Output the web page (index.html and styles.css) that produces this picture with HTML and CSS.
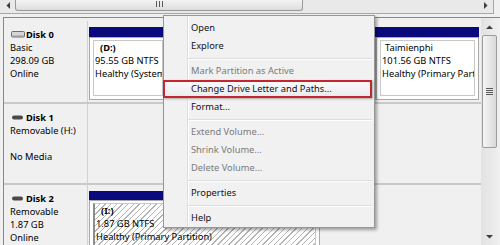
FILE: index.html
```html
<!DOCTYPE html>
<html lang="en">
<head>
  <meta charset="UTF-8">
  <title>Disk Management</title>
  <link rel="stylesheet" href="styles.css">
</head>
<body>
  <div class="hscroll">
    <div class="hbtn">
      <svg width="4" height="7" viewBox="0 0 4 7"><polygon points="4,0 4,7 0.5,3.5" fill="#3c3c3c"/></svg>
    </div>
    <div class="hthumb"><span class="grip"></span></div>
    <div class="htrack"></div>
    <div class="hbtn">
      <svg width="4" height="7" viewBox="0 0 4 7"><polygon points="0,0 0,7 3.5,3.5" fill="#3c3c3c"/></svg>
    </div>
  </div>

  <div class="pane">
    <div class="disks">
      <div class="disk disk-0">
        <div class="disk-label">
          <div class="disk-name">
            <svg class="disk-icon" width="14" height="7" viewBox="0 0 14 7"><rect x="0.5" y="0.5" width="13" height="5.5" rx="1" fill="#d6d6d6" stroke="#6e6e6e"/><rect x="1.5" y="4.5" width="11" height="1" fill="#9a9a9a"/></svg>
            Disk 0
          </div>
          <div>Basic</div>
          <div>298.09 GB</div>
          <div>Online</div>
        </div>
        <div class="parts">
          <div class="part part-d">
            <div class="bar"></div>
            <div class="body">
              <div class="inner">
                <div class="vol noname">(D:)</div>
                <div>95.55 GB NTFS</div>
                <div>Healthy (System</div>
              </div>
            </div>
          </div>
          <!-- partition hidden under the context menu -->
          <div class="part part-c">
            <div class="bar"></div>
            <div class="body">
              <div class="inner"></div>
            </div>
          </div>
          <div class="part part-t">
            <div class="bar"></div>
            <div class="body">
              <div class="inner">
                <div class="vol-plain">Taimienphi</div>
                <div>101.56 GB NTFS</div>
                <div>Healthy (Primary Partition)</div>
              </div>
            </div>
          </div>
        </div>
      </div>

      <div class="disk disk-1">
        <div class="disk-label">
          <div class="disk-name">
            <svg class="disk-icon" width="14" height="7" viewBox="0 0 14 7"><rect x="1" y="1.5" width="11" height="4" rx="2" fill="#4a4a4a"/></svg>
            Disk 1
          </div>
          <div>Removable (H:)</div>
          <div>&nbsp;</div>
          <div>No Media</div>
        </div>
        <div class="parts"></div>
      </div>

      <div class="disk disk-2">
        <div class="disk-label">
          <div class="disk-name">
            <svg class="disk-icon" width="14" height="7" viewBox="0 0 14 7"><rect x="1" y="1.5" width="11" height="4" rx="2" fill="#4a4a4a"/></svg>
            Disk 2
          </div>
          <div>Removable</div>
          <div>1.87 GB</div>
          <div>Online</div>
        </div>
        <div class="parts">
          <div class="part part-i">
            <div class="bar"></div>
            <div class="body">
              <div class="inner hatched">
                <div class="vol noname">(I:)</div>
                <div>1.87 GB NTFS</div>
                <div>Healthy (Primary Partition)</div>
              </div>
            </div>
          </div>
        </div>
      </div>
    </div>

    <div class="vscroll">
      <div class="vbtn">
        <svg width="7" height="4" viewBox="0 0 7 4"><polygon points="0,4 7,4 3.5,0.5" fill="#3c3c3c"/></svg>
      </div>
      <div class="vthumb"><span class="grip-h"></span></div>
      <div class="vtrack"></div>
      <div class="vbtn">
        <svg width="7" height="4" viewBox="0 0 7 4"><polygon points="0,0 7,0 3.5,3.5" fill="#3c3c3c"/></svg>
      </div>
    </div>
  </div>

  <div class="menu">
    <div class="item">Open</div>
    <div class="item">Explore</div>
    <div class="sep"></div>
    <div class="item disabled">Mark Partition as Active</div>
    <div class="item marked">Change Drive Letter and Paths...</div>
    <div class="item">Format...</div>
    <div class="sep"></div>
    <div class="item disabled">Extend Volume...</div>
    <div class="item disabled">Shrink Volume...</div>
    <div class="item disabled">Delete Volume...</div>
    <div class="sep"></div>
    <div class="item">Properties</div>
    <div class="sep"></div>
    <div class="item">Help</div>
  </div>
</body>
</html>
```

FILE: styles.css
```css
* {
  box-sizing: border-box;
}
body {
  margin: 0;
  width: 500px;
  height: 245px;
  overflow: hidden;
  position: relative;
  background: #f0f0f0;
  font-family: "Noto Sans", sans-serif;
  font-size: 9.3px;
  color: #000;
}

/* top scrollbar (volume list pane, cut off) */
.hscroll {
  display: flex;
  height: 14px;
  margin-right: 6px;
  border-right: 1px solid #a7a7a7;
  border-bottom: 1px solid #a7a7a7;
  background: #e9e9e9;
  margin-bottom: 3px;
}
.hbtn {
  width: 15px;
  display: flex;
  justify-content: center;
  padding-top: 2px;
}
.hthumb {
  width: 288px;
  height: 11px;
  border: 1px solid #999;
  border-top: none;
  border-radius: 0 0 3px 3px;
  background: linear-gradient(#f4f4f4, #dcdcdc);
  display: flex;
  justify-content: center;
  padding-top: 1px;
}
.grip {
  width: 7px;
  height: 6px;
  background: repeating-linear-gradient(to right, #5a5a5a 0 1px, transparent 1px 3px);
}
.htrack {
  flex: 1;
}

/* disk pane */
.pane {
  display: flex;
  height: 228px;
  margin-left: 3px;
  border-left: 1px solid #828790;
  border-top: 1px solid #828790;
}
.disks {
  flex: 1;
  min-width: 0;
  padding-top: 3px;
}
.disk {
  display: flex;
  border-bottom: 2px solid #c9c9c9;
}
.disk-0 {
  height: 83px;
}
.disk-1 {
  height: 81px;
}
.disk-2 {
  height: 70px;
  border-bottom: none;
}
.disk-label {
  width: 84px;
  flex-shrink: 0;
  padding: 7px 0 0 6px;
  border-right: 1px solid #d3d3d3;
  line-height: 13px;
  white-space: nowrap;
}
.disk-name {
  display: flex;
  align-items: center;
  gap: 1px;
  font-weight: bold;
}
.disk-icon {
  margin-left: 1px;
}
.parts {
  flex: 1;
  min-width: 0;
  display: flex;
  padding: 6px 2px 0 1px;
}
.part {
  display: flex;
  flex-direction: column;
  min-width: 0;
  flex-shrink: 0;
}
.part-d {
  width: 78px;
}
.part-c {
  flex: 1;
  flex-shrink: 1;
}
.part-t {
  width: 103px;
}
.part-i {
  width: 231px;
}
.bar {
  height: 10px;
  background: #0a0a7d;
}
.body {
  height: 63px;
  border: 1px solid #a9a9a9;
  background: #fff;
  padding: 2px 3px 3px;
  overflow: hidden;
}
.inner {
  height: 100%;
  border: 1px solid #c8c8c8;
  padding-left: 1px;
  line-height: 13px;
  white-space: nowrap;
  overflow: hidden;
}
.vol {
  font-weight: bold;
}
.noname {
  padding-left: 5px;
}
.vol-plain {
  padding-left: 3px;
}
.hatched {
  border-left: 2px solid #8c8c8c;
  background: repeating-linear-gradient(135deg, #fff 0 3px, #b4b4b4 3px 4px);
}

/* right scrollbar */
.vscroll {
  width: 17px;
  flex-shrink: 0;
  margin-right: 2px;
  display: flex;
  flex-direction: column;
  background: linear-gradient(to right, #e2e2e2, #eeeeee);
}
.vbtn {
  height: 17px;
  display: flex;
  justify-content: center;
  align-items: center;
}
.vthumb {
  height: 113px;
  margin: 0 1px;
  border: 1px solid #9c9c9c;
  border-radius: 2px;
  background: linear-gradient(to right, #f5f5f5, #dadada);
  display: flex;
  justify-content: center;
  align-items: center;
}
.grip-h {
  width: 7px;
  height: 7px;
  background: repeating-linear-gradient(#5a5a5a 0 1px, transparent 1px 2px);
}
.vtrack {
  flex: 1;
}

/* context menu */
.menu {
  position: absolute;
  z-index: 1;
  left: 163px;
  top: 15px;
  width: 212px;
  height: 213px;
  padding: 3px 2px 2px 0;
  border: 1px solid #979797;
  background-color: #f1f1f1;
  background-image: linear-gradient(to right, transparent 23px, #dcdddd 23px 24px, #fff 24px 25px, transparent 25px);
  box-shadow: 2px 2px 3px rgba(0, 0, 0, 0.35);
}
.item {
  height: 18px;
  line-height: 18px;
  padding-left: 27px;
  white-space: nowrap;
  color: #111;
}
.item.disabled {
  color: #7a7a7a;
}
.item.marked {
  margin-left: -1px;
  padding-left: 26px;
  line-height: 14px;
  border: 2px solid #c3262e;
  background: linear-gradient(#f9f9fa, #ececef);
  box-shadow: 1px 1px 2px rgba(0, 0, 0, 0.3);
}
.sep {
  height: 7px;
  margin-left: 24px;
  padding-top: 3px;
}
.sep::after {
  content: "";
  display: block;
  height: 1px;
  background: #dcdddd;
  border-bottom: 1px solid #fff;
  box-sizing: content-box;
}
```
